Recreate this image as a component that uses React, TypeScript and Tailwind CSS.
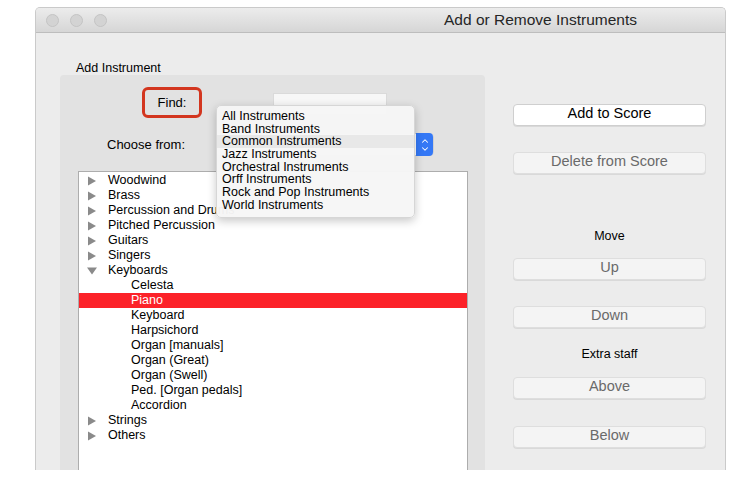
import { ChevronDown, ChevronUp } from "lucide-react"

const families = [
  { name: "Woodwind" },
  { name: "Brass" },
  { name: "Percussion and Drums" },
  { name: "Pitched Percussion" },
  { name: "Guitars" },
  { name: "Singers" },
  {
    name: "Keyboards",
    open: true,
    children: [
      "Celesta",
      "Piano",
      "Keyboard",
      "Harpsichord",
      "Organ [manuals]",
      "Organ (Great)",
      "Organ (Swell)",
      "Ped. [Organ pedals]",
      "Accordion",
    ],
  },
  { name: "Strings" },
  { name: "Others" },
]

const groups = [
  "All Instruments",
  "Band Instruments",
  "Common Instruments",
  "Jazz Instruments",
  "Orchestral Instruments",
  "Orff Instruments",
  "Rock and Pop Instruments",
  "World Instruments",
]

function Disclosure({ open }: { open?: boolean }) {
  return (
    <svg width="10" height="10" viewBox="0 0 10 10" className="ml-[8px] mr-[11px] shrink-0">
      {open ? <path d="M0 1.5 L10 1.5 L5 8.5 Z" fill="#8a8a8a" /> : <path d="M1 0.5 L9 5 L1 9.5 Z" fill="#8a8a8a" />}
    </svg>
  )
}

function SideButton({ label, primary, className }: { label: string; primary?: boolean; className?: string }) {
  return (
    <button
      className={
        "h-[22px] w-[193px] rounded-[4px] border pb-[3px] text-[14.5px] leading-none shadow-[0_1px_0_rgba(0,0,0,0.08)] " +
        (primary ? "border-[#cfcfcf] bg-white text-black " : "border-[#dedede] bg-[#f4f4f4] text-[#6a6a6a] ") +
        (className ?? "")
      }
    >
      {label}
    </button>
  )
}

export default function App() {
  return (
    <div className="h-[485px] w-[750px] overflow-hidden bg-white pl-[35px] pt-[7px] font-['Liberation_Sans',Arial,sans-serif]">
      <div className="flex h-[463px] w-[691px] flex-col overflow-hidden rounded-t-[5px] border border-b-0 border-[#cacaca] bg-[#ececec]">
        {/* Title bar */}
        <div className="flex h-[25px] shrink-0 items-center border-b border-[#bdbdbd] bg-gradient-to-b from-[#ececec] to-[#d6d6d6]">
          <div className="ml-[10px] flex gap-[11px]">
            <span className="h-[13px] w-[13px] rounded-full border border-[#c4c4c4] bg-[#d3d3d3]" />
            <span className="h-[13px] w-[13px] rounded-full border border-[#c4c4c4] bg-[#d3d3d3]" />
            <span className="h-[13px] w-[13px] rounded-full border border-[#c4c4c4] bg-[#d3d3d3]" />
          </div>
          <span className="ml-[337px] text-[15.5px] leading-none text-[#262626]">Add or Remove Instruments</span>
        </div>

        <div className="flex min-h-0 flex-1">
          {/* Left column */}
          <div className="ml-[24px] flex w-[425px] flex-col">
            <div className="mt-[29px] h-[13px] pl-[16px] text-[12.5px] leading-[13px] text-black">Add Instrument</div>
            <div className="relative flex flex-1 flex-col rounded-t-[4px] bg-[#e2e2e2]">
              {/* Find row */}
              <div className="mt-[12px] flex items-start">
                <div className="ml-[82px] flex h-[31px] w-[60px] items-center justify-center rounded-[6px] border-[3px] border-[#d3361f] text-[13px] text-black">
                  Find:
                </div>
                <div className="ml-[71px] mt-[6px] h-[22px] w-[114px] border border-[#dadada] bg-[#f7f7f7]" />
              </div>

              {/* Choose row */}
              <div className="mt-[15px] flex h-[23px] items-center">
                <span className="ml-[47px] text-[13px] text-black">Choose from:</span>
                <div className="ml-[31px] flex h-[23px] w-[218px] items-center justify-end rounded-[4px] border border-[#d0d0d0] bg-white">
                  <div className="flex h-[23px] w-[17px] flex-col items-center justify-center rounded-r-[4px] bg-[#3478f6]">
                    <ChevronUp size={10} strokeWidth={2.5} className="-mb-[2px] text-white" />
                    <ChevronDown size={10} strokeWidth={2.5} className="text-white" />
                  </div>
                </div>
              </div>

              {/* Instrument tree */}
              <div className="ml-[18px] mt-[15px] w-[390px] flex-1 border border-b-0 border-[#adadad] bg-white pt-[1px] text-[12.5px] text-black">
                {families.map((f) => (
                  <div key={f.name}>
                    <div className="flex h-[15px] items-center leading-[15px]">
                      <Disclosure open={f.open} />
                      <span className="whitespace-nowrap">{f.name}</span>
                    </div>
                    {f.children?.map((c) => (
                      <div
                        key={c}
                        className={
                          "h-[15px] pl-[52px] leading-[15px] " + (c === "Piano" ? "bg-[#fc2229] text-white" : "")
                        }
                      >
                        {c}
                      </div>
                    ))}
                  </div>
                ))}
              </div>

              {/* Open group menu */}
              <div className="absolute left-[156px] top-[30px] w-[199px] rounded-[5px] border border-[#d6d6d6] bg-[#f6f6f6]/[0.97] pb-[5px] pt-[4px] shadow-[0_3px_10px_rgba(0,0,0,0.22)]">
                {groups.map((g) => (
                  <div
                    key={g}
                    className={
                      "h-[12.7px] px-[5px] text-[12.5px] leading-[12.7px] text-black " +
                      (g === "Common Instruments" ? "bg-[#e8e8e8]" : "")
                    }
                  >
                    {g}
                  </div>
                ))}
              </div>
            </div>
          </div>

          {/* Right column */}
          <div className="ml-[28px] flex w-[193px] flex-col items-center">
            <SideButton label="Add to Score" primary className="mt-[71px]" />
            <SideButton label="Delete from Score" className="mt-[26px]" />
            <div className="mt-[55px] h-[14px] text-[12.5px] leading-[14px] text-black">Move</div>
            <SideButton label="Up" className="mt-[15px]" />
            <SideButton label="Down" className="mt-[26px]" />
            <div className="mt-[19px] h-[14px] text-[12.5px] leading-[14px] text-black">Extra staff</div>
            <SideButton label="Above" className="mt-[16px]" />
            <SideButton label="Below" className="mt-[27px]" />
          </div>
        </div>
      </div>
    </div>
  )
}
